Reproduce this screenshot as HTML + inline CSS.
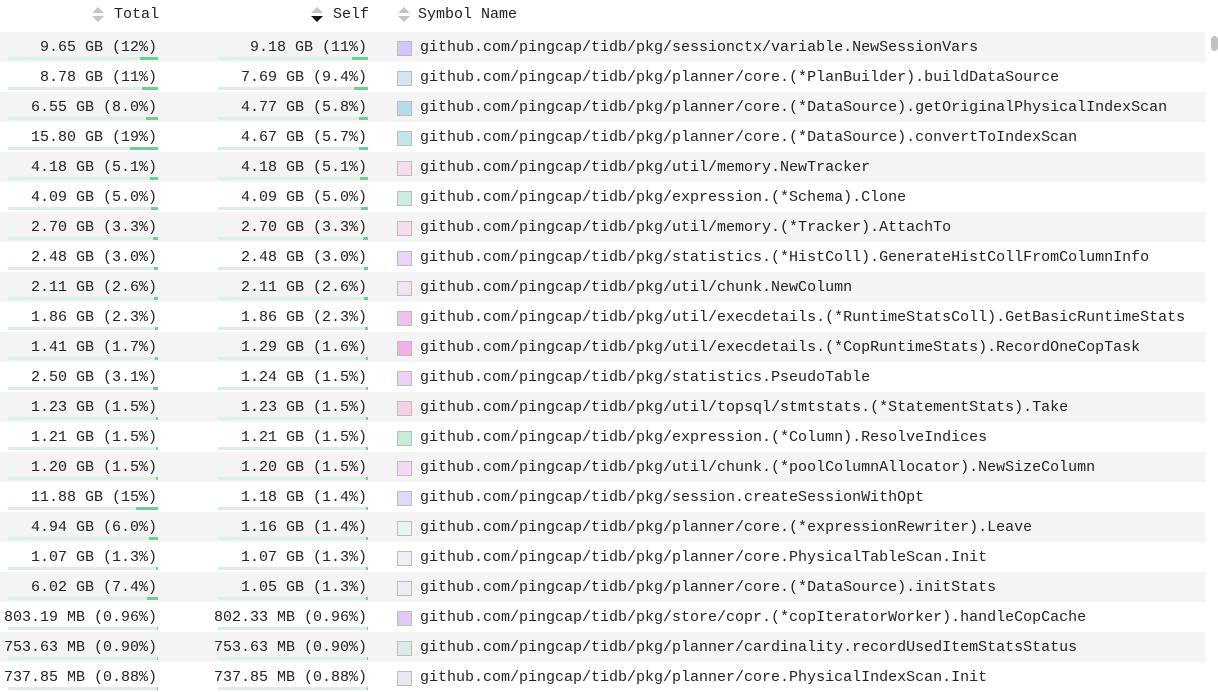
<!DOCTYPE html>
<html><head><meta charset="utf-8"><style>
body{margin:0;width:1218px;height:672px;overflow:hidden;background:#fff;font-family:"Liberation Mono",monospace;font-size:15px;color:#222;position:relative}
.h{position:absolute;top:5px;height:20px;line-height:20px;font-size:15px}
.row{position:absolute;left:0;width:1206px;height:30px}
.row.g{background:#f4f4f4}
.t{position:absolute;top:6px;line-height:20px;text-align:right;white-space:pre}
.bar{position:absolute;top:25px;height:3px;background:#dcf0e2}
.bar i{position:absolute;right:0;top:0;height:3px;background:#6ccf94}
.sw{position:absolute;left:397px;top:9px;width:13px;height:13px;border:1px solid #bdbdbd}
.n{position:absolute;left:420px;top:6px;line-height:20px;white-space:pre}
</style></head><body>
<svg style="position:absolute;left:92px;top:7px" width="12" height="16"><path d="M6 0L12 6H0Z" fill="#c4c4c4"/><path d="M6 15L12 9H0Z" fill="#c4c4c4"/></svg>
<div class="h" style="left:114px">Total</div>
<svg style="position:absolute;left:311px;top:7px" width="12" height="16"><path d="M6 0L12 6H0Z" fill="#c4c4c4"/><path d="M6 15L12 9H0Z" fill="#111"/></svg>
<div class="h" style="left:333px">Self</div>
<svg style="position:absolute;left:398px;top:7px" width="12" height="16"><path d="M6 0L12 6H0Z" fill="#c4c4c4"/><path d="M6 15L12 9H0Z" fill="#c4c4c4"/></svg>
<div class="h" style="left:418px">Symbol Name</div>
<div id="rows"></div>
<div style="position:absolute;left:1207px;top:31px;width:11px;height:641px;background:#fff"></div>
<div style="position:absolute;left:1211px;top:36px;width:7px;height:15px;border-radius:4px;background:#c1c1c1"></div>
<script>
var d=[
["9.65 GB (12%)",12,"9.18 GB (11%)",11,"#d4c4f8","github.com/pingcap/tidb/pkg/sessionctx/variable.NewSessionVars"],
["8.78 GB (11%)",11,"7.69 GB (9.4%)",9.4,"#d2e6f4","github.com/pingcap/tidb/pkg/planner/core.(*PlanBuilder).buildDataSource"],
["6.55 GB (8.0%)",8,"4.77 GB (5.8%)",5.8,"#b5dde8","github.com/pingcap/tidb/pkg/planner/core.(*DataSource).getOriginalPhysicalIndexScan"],
["15.80 GB (19%)",19,"4.67 GB (5.7%)",5.7,"#c5e4ec","github.com/pingcap/tidb/pkg/planner/core.(*DataSource).convertToIndexScan"],
["4.18 GB (5.1%)",5.1,"4.18 GB (5.1%)",5.1,"#f6dcef","github.com/pingcap/tidb/pkg/util/memory.NewTracker"],
["4.09 GB (5.0%)",5,"4.09 GB (5.0%)",5,"#cdece0","github.com/pingcap/tidb/pkg/expression.(*Schema).Clone"],
["2.70 GB (3.3%)",3.3,"2.70 GB (3.3%)",3.3,"#f6dcf0","github.com/pingcap/tidb/pkg/util/memory.(*Tracker).AttachTo"],
["2.48 GB (3.0%)",3,"2.48 GB (3.0%)",3,"#ebd2f6","github.com/pingcap/tidb/pkg/statistics.(*HistColl).GenerateHistCollFromColumnInfo"],
["2.11 GB (2.6%)",2.6,"2.11 GB (2.6%)",2.6,"#f6e0f4","github.com/pingcap/tidb/pkg/util/chunk.NewColumn"],
["1.86 GB (2.3%)",2.3,"1.86 GB (2.3%)",2.3,"#f2c0ec","github.com/pingcap/tidb/pkg/util/execdetails.(*RuntimeStatsColl).GetBasicRuntimeStats"],
["1.41 GB (1.7%)",1.7,"1.29 GB (1.6%)",1.6,"#f0b0e8","github.com/pingcap/tidb/pkg/util/execdetails.(*CopRuntimeStats).RecordOneCopTask"],
["2.50 GB (3.1%)",3.1,"1.24 GB (1.5%)",1.5,"#ead2f6","github.com/pingcap/tidb/pkg/statistics.PseudoTable"],
["1.23 GB (1.5%)",1.5,"1.23 GB (1.5%)",1.5,"#f6d0e6","github.com/pingcap/tidb/pkg/util/topsql/stmtstats.(*StatementStats).Take"],
["1.21 GB (1.5%)",1.5,"1.21 GB (1.5%)",1.5,"#c6ecd6","github.com/pingcap/tidb/pkg/expression.(*Column).ResolveIndices"],
["1.20 GB (1.5%)",1.5,"1.20 GB (1.5%)",1.5,"#f2daf4","github.com/pingcap/tidb/pkg/util/chunk.(*poolColumnAllocator).NewSizeColumn"],
["11.88 GB (15%)",15,"1.18 GB (1.4%)",1.4,"#dcdaf8","github.com/pingcap/tidb/pkg/session.createSessionWithOpt"],
["4.94 GB (6.0%)",6,"1.16 GB (1.4%)",1.4,"#e6f4f2","github.com/pingcap/tidb/pkg/planner/core.(*expressionRewriter).Leave"],
["1.07 GB (1.3%)",1.3,"1.07 GB (1.3%)",1.3,"#e8f2f6","github.com/pingcap/tidb/pkg/planner/core.PhysicalTableScan.Init"],
["6.02 GB (7.4%)",7.4,"1.05 GB (1.3%)",1.3,"#ececf8","github.com/pingcap/tidb/pkg/planner/core.(*DataSource).initStats"],
["803.19 MB (0.96%)",0.96,"802.33 MB (0.96%)",0.96,"#e2c8f4","github.com/pingcap/tidb/pkg/store/copr.(*copIteratorWorker).handleCopCache"],
["753.63 MB (0.90%)",0.9,"753.63 MB (0.90%)",0.9,"#d8ecec","github.com/pingcap/tidb/pkg/planner/cardinality.recordUsedItemStatsStatus"],
["737.85 MB (0.88%)",0.88,"737.85 MB (0.88%)",0.88,"#e8e8f0","github.com/pingcap/tidb/pkg/planner/core.PhysicalIndexScan.Init"]];
var h="";
d.forEach(function(r,i){
var y=32+i*30;
h+='<div class="row'+(i%2==0?' g':'')+'" style="top:'+y+'px">'+
'<div class="t" style="right:1049px">'+r[0]+'</div>'+
'<div class="bar" style="left:8px;width:150px"><i style="width:'+Math.max(1,r[1]*1.5)+'px"></i></div>'+
'<div class="t" style="right:839px">'+r[2]+'</div>'+
'<div class="bar" style="left:218px;width:150px"><i style="width:'+Math.max(1,r[3]*1.5)+'px"></i></div>'+
'<div class="sw" style="background:'+r[4]+'"></div>'+
'<div class="n">'+r[5]+'</div></div>';
});
document.getElementById("rows").innerHTML=h;
</script>
</body></html>
